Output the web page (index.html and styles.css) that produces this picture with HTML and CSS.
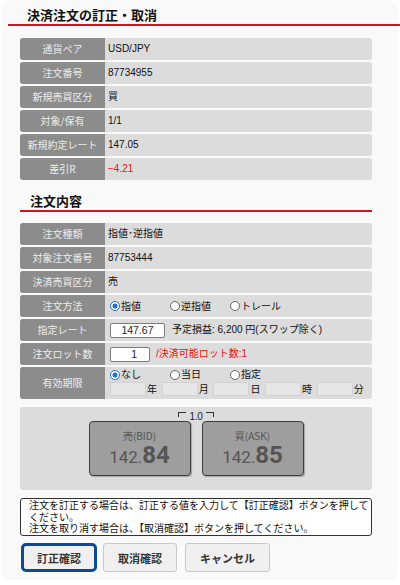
FILE: index.html
```html
<!DOCTYPE html>
<html lang="ja">
<head>
<meta charset="utf-8">
<title>決済注文の訂正・取消</title>
<link rel="stylesheet" href="styles.css">
</head>
<body>
<div class="card">
  <h1 class="head1">決済注文の訂正・取消</h1>

  <div class="table t1">
    <div class="row"><div class="lbl">通貨ペア</div><div class="val">USD/JPY</div></div>
    <div class="row"><div class="lbl">注文番号</div><div class="val">87734955</div></div>
    <div class="row"><div class="lbl">新規売買区分</div><div class="val">買</div></div>
    <div class="row"><div class="lbl">対象/保有</div><div class="val">1/1</div></div>
    <div class="row"><div class="lbl">新規約定レート</div><div class="val">147.05</div></div>
    <div class="row"><div class="lbl">差引R</div><div class="val red">−4.21</div></div>
  </div>

  <h2 class="head2">注文内容</h2>

  <div class="table t2">
    <div class="row"><div class="lbl">注文種類</div><div class="val">指値･逆指値</div></div>
    <div class="row"><div class="lbl">対象注文番号</div><div class="val">87753444</div></div>
    <div class="row"><div class="lbl">決済売買区分</div><div class="val">売</div></div>
    <div class="row"><div class="lbl">注文方法</div>
      <div class="val radios">
        <span class="opt"><span class="radio on"></span>指値</span>
        <span class="opt"><span class="radio"></span>逆指値</span>
        <span class="opt"><span class="radio"></span>トレール</span>
      </div>
    </div>
    <div class="row"><div class="lbl">指定レート</div>
      <div class="val">
        <span class="box rate">147.67</span><span class="note">予定損益: 6,200 円(スワップ除く)</span>
      </div>
    </div>
    <div class="row"><div class="lbl">注文ロット数</div>
      <div class="val">
        <span class="box lot">1</span><span class="avail">/決済可能ロット数:1</span>
      </div>
    </div>
    <div class="row tall"><div class="lbl">有効期限</div>
      <div class="val col">
        <div class="radios">
          <span class="opt"><span class="radio on"></span>なし</span>
          <span class="opt"><span class="radio"></span>当日</span>
          <span class="opt"><span class="radio"></span>指定</span>
        </div>
        <div class="dates">
          <span class="dg"><span class="dbox"></span><span class="du">年</span></span>
          <span class="dg"><span class="dbox"></span><span class="du">月</span></span>
          <span class="dg"><span class="dbox"></span><span class="du">日</span></span>
          <span class="dg"><span class="dbox"></span><span class="du">時</span></span>
          <span class="dg"><span class="dbox"></span><span class="du">分</span></span>
        </div>
      </div>
    </div>
  </div>

  <div class="price">
    <div class="spread"><span class="brk l"></span><span class="sp">1.0</span><span class="brk r"></span></div>
    <div class="pbtns">
      <div class="pbtn">
        <div class="side">売(BID)</div>
        <div class="num"><span class="small">142.</span><span class="big">84</span></div>
      </div>
      <div class="pbtn">
        <div class="side">買(ASK)</div>
        <div class="num"><span class="small">142.</span><span class="big">85</span></div>
      </div>
    </div>
  </div>

  <div class="notice"><p class="nl">注文を訂正する場合は、訂正する値を入力して【訂正確認】ボタンを押してください。</p><p class="nl">注文を取り消す場合は、【取消確認】ボタンを押してください。</p></div>

  <div class="actions">
    <button class="btn primary">訂正確認</button>
    <button class="btn b2">取消確認</button>
    <button class="btn b3">キャンセル</button>
  </div>
</div>
</body>
</html>
```
FILE: styles.css
```css
html, body {
  margin: 0;
  padding: 0;
  background: #ffffff;
}
body {
  font-family: "Liberation Sans", "Noto Sans CJK JP", sans-serif;
  font-size: 10px;
  color: #111;
}
.card {
  margin: 1px 3px 0 2px;
  height: 579px;
  background: #f9f9f9;
  border-radius: 10px;
  box-shadow: 0 0 2px rgba(0,0,0,0.06);
  padding-top: 5px;
  box-sizing: border-box;
}
.head1 {
  margin: 0 -3px 0 6px;
  padding-left: 19px;
  font-family: "Noto Sans CJK JP", sans-serif;
  font-size: 13px;
  font-weight: bold;
  line-height: 18px;
  color: #111;
  border-bottom: 2px solid #c9181f;
}
.head2 {
  margin: 11px 25px 0 18px;
  padding-left: 10px;
  font-family: "Noto Sans CJK JP", sans-serif;
  font-size: 13px;
  font-weight: bold;
  line-height: 19px;
  color: #111;
  border-bottom: 2px solid #c9181f;
}
.table {
  margin: 0 25px 0 18px;
}
.t1 { margin-top: 12px; }
.t2 { margin-top: 11px; }
.row {
  display: flex;
  height: 22px;
  margin-bottom: 2px;
  background: #dcdcdc;
  border-radius: 3px;
  overflow: hidden;
}
.row.tall { height: 32px; }
.lbl {
  width: 85px;
  flex: none;
  background: #8c8c8c;
  color: #ececec;
  text-align: center;
  line-height: 22px;
  font-family: "Noto Sans CJK JP", sans-serif;
  font-size: 10px;
}
.row.tall .lbl { line-height: 32px; }
.val {
  display: flex;
  align-items: center;
  padding-left: 3px;
  line-height: 22px;
  white-space: nowrap;
}
.red { color: #ee1111; }
.radios {
  display: flex;
  align-items: center;
  padding-left: 5px;
}
.opt {
  display: inline-flex;
  align-items: center;
  width: 60px;
  line-height: 13px;
}
.radio {
  display: inline-block;
  width: 8px;
  height: 8px;
  border: 1px solid #666;
  border-radius: 50%;
  background: #fff;
  margin-right: 1px;
}
.radio.on {
  border-color: #1e6fe0;
  background: radial-gradient(circle, #1e6fe0 0 2.2px, #ffffff 2.8px);
}
.box {
  display: inline-block;
  height: 13px;
  line-height: 13px;
  background: #fff;
  border: 1px solid #7a7a7a;
  border-radius: 2px;
  font-size: 10.5px;
  color: #222;
  margin-left: 2px;
  box-sizing: content-box;
}
.rate {
  width: 53px;
  text-align: center;
}
.lot {
  width: 26px;
  padding-right: 12px;
  text-align: right;
}
.note {
  margin-left: 7px;
  font-size: 10px;
}
.avail {
  margin-left: 6px;
  color: #ee1111;
}
.col {
  flex-direction: column;
  align-items: flex-start;
  justify-content: flex-start;
  padding-top: 1px;
}
.col .radios {
  height: 13px;
  margin-left: 2px;
  padding-left: 0;
}
.dates {
  display: flex;
  margin-top: 1px;
  margin-left: 2px;
}
.dg {
  display: inline-flex;
  align-items: center;
  width: 51.7px;
}
.dbox {
  display: inline-block;
  width: 34px;
  height: 12px;
  background: #e6e6e6;
  border: 1px solid #d2d2d2;
}
.du {
  font-family: "Noto Sans CJK JP", sans-serif;
  font-size: 10px;
  line-height: 14px;
  margin-left: 1px;
}
.price {
  margin: 8px 25px 0 18px;
  height: 83px;
  box-sizing: border-box;
  background: #dcdcdc;
  border-radius: 3px;
  padding-top: 2px;
}
.spread {
  display: flex;
  justify-content: center;
  align-items: flex-start;
  height: 12px;
  padding-top: 3px;
  box-sizing: border-box;
}
.sp {
  font-size: 10px;
  line-height: 9px;
  color: #222;
  margin: 0 3px;
  letter-spacing: -0.3px;
}
.brk {
  display: inline-block;
  width: 7px;
  height: 4px;
  border-top: 1px solid #333;
}
.brk.l { border-left: 1px solid #333; }
.brk.r { border-right: 1px solid #333; }
.pbtns {
  display: flex;
  justify-content: center;
  gap: 11px;
}
.pbtn {
  width: 100px;
  height: 53px;
  background: #9e9e9e;
  border: 1px solid #3e3e3e;
  border-radius: 4px;
  box-shadow: 1px 1px 1px rgba(0,0,0,0.25);
  text-align: center;
  color: #555;
}
.side {
  font-family: "Noto Sans CJK JP", sans-serif;
  font-size: 10px;
  line-height: 12px;
  margin-top: 8px;
}
.num {
  line-height: 26px;
  white-space: nowrap;
}
.small {
  font-family: "Roboto", "Liberation Sans", sans-serif;
  font-size: 17px;
}
.big {
  font-family: "Roboto", "Liberation Sans", sans-serif;
  font-size: 24px;
  font-weight: bold;
}
.notice {
  margin: 8px 25px 0 18px;
  height: 38px;
  box-sizing: border-box;
  background: #fff;
  border: 1px solid #333;
  border-radius: 3px;
  padding: 1px 0 0 8px;
  font-family: "Liberation Sans", "Noto Sans CJK JP", sans-serif;
  font-size: 10px;
  line-height: 11.6px;
  color: #111;
}
.nl {
  margin: 0;
}
.actions {
  display: flex;
  margin: 7px 0 0 19px;
}
.btn {
  height: 29px;
  box-sizing: border-box;
  background: #f0f0f0;
  border: 1px solid #c8c8c8;
  border-radius: 3px;
  font-family: "Noto Sans CJK JP", sans-serif;
  font-size: 11px;
  font-weight: bold;
  color: #333;
  padding: 0;
  margin: 0;
}
.primary {
  width: 76px;
  border: 3px solid #0b4a96;
  border-radius: 5px;
}
.b2 {
  width: 74px;
  margin-left: 6px;
}
.b3 {
  width: 85px;
  margin-left: 8px;
}
```
